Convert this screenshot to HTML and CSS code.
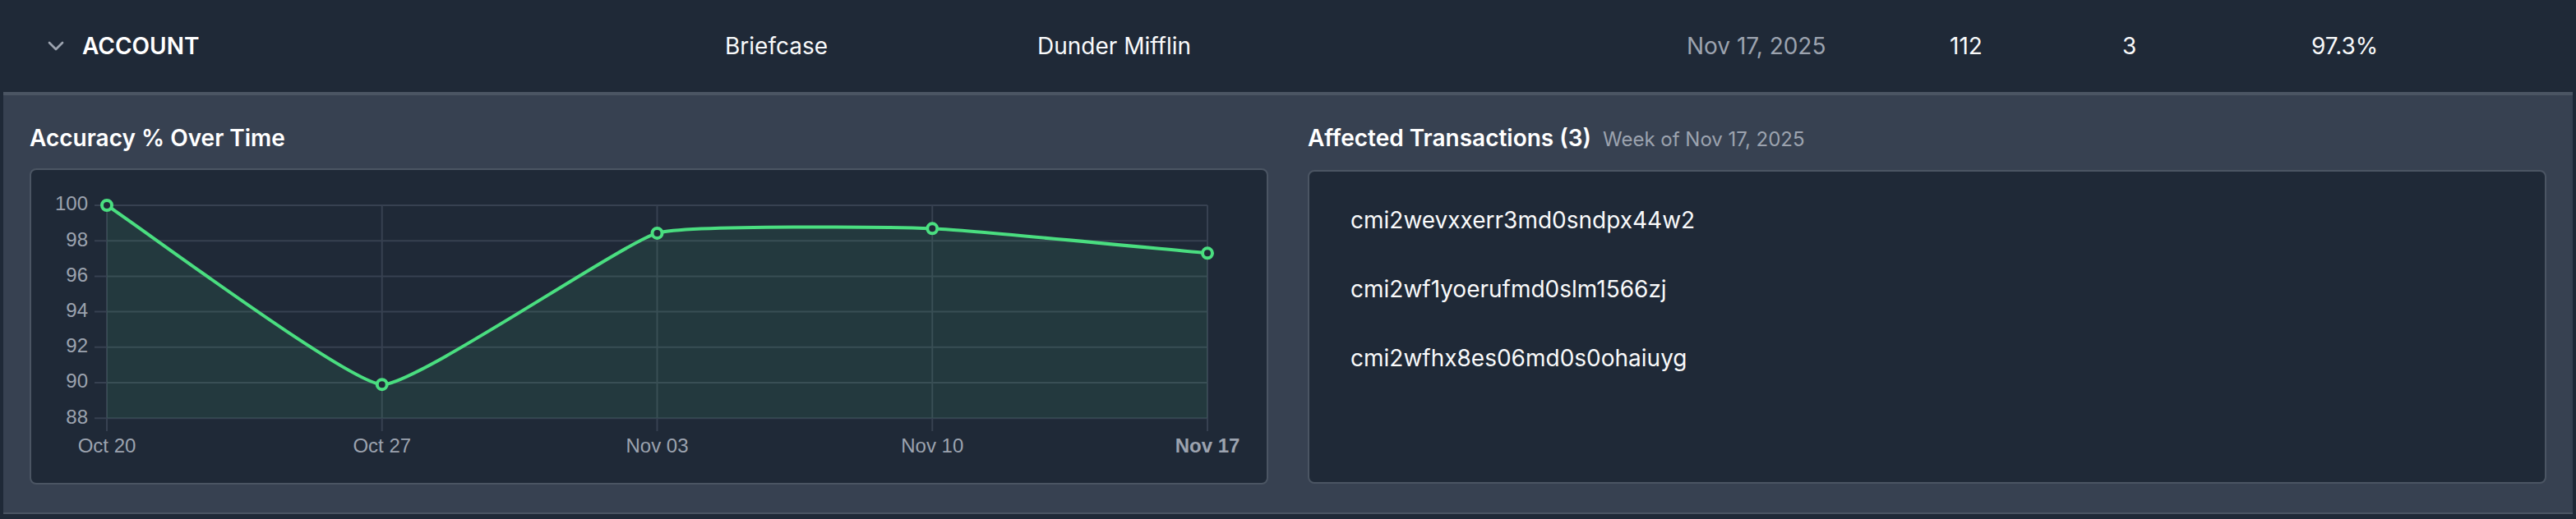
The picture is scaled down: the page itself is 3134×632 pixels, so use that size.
FILE: index.html
```html
<!DOCTYPE html>
<html lang="en">
<head>
<meta charset="utf-8">
<title>Account accuracy</title>
<link rel="stylesheet" href="styles.css">
</head>
<body>
<div class="table">
  <div class="row">
    <div class="cell cell-name">
      <svg class="chev" viewBox="0 0 24 24" width="32" height="32"><path d="m6 9 6 6 6-6" fill="none" stroke="#9ca3af" stroke-width="2" stroke-linecap="round" stroke-linejoin="round"/></svg>
      <span class="name">ACCOUNT</span>
    </div>
    <div class="cell">Briefcase</div>
    <div class="cell">Dunder Mifflin</div>
    <div class="cell muted">Nov 17, 2025</div>
    <div class="cell">112</div>
    <div class="cell">3</div>
    <div class="cell">97.3%</div>
  </div>
  <div class="panel">
    <section class="col">
      <h3 class="title">Accuracy % Over Time</h3>
      <div class="card chart-card">
        <svg class="chart" width="1503" height="381" viewBox="0 0 1503 381">
          <g class="grid" stroke="#374151" stroke-width="2">
            <line x1="77" y1="43" x2="1431" y2="43"/>
            <line x1="77" y1="86.2" x2="1431" y2="86.2"/>
            <line x1="77" y1="129.4" x2="1431" y2="129.4"/>
            <line x1="77" y1="172.6" x2="1431" y2="172.6"/>
            <line x1="77" y1="215.8" x2="1431" y2="215.8"/>
            <line x1="77" y1="259" x2="1431" y2="259"/>
            <line x1="77" y1="302.2" x2="1431" y2="302.2"/>
            <line x1="92" y1="43" x2="92" y2="318"/>
            <line x1="426.75" y1="43" x2="426.75" y2="318"/>
            <line x1="761.5" y1="43" x2="761.5" y2="318"/>
            <line x1="1096.25" y1="43" x2="1096.25" y2="318"/>
            <line x1="1431" y1="43" x2="1431" y2="318"/>
          </g>
          <path class="area" d="M92,43 C132.17,69.18 385.68,259.12 426.75,261.2 C466.02,263.19 718.68,89.05 761.5,76.9 C799.02,66.26 1056.16,69.84 1096.25,71.3 C1136.5,72.77 1390.83,97.7 1431,101.3 L1431,302.2 L92,302.2 Z"/>
          <path class="line" d="M92,43 C132.17,69.18 385.68,259.12 426.75,261.2 C466.02,263.19 718.68,89.05 761.5,76.9 C799.02,66.26 1056.16,69.84 1096.25,71.3 C1136.5,72.77 1390.83,97.7 1431,101.3"/>
          <g class="pts">
            <circle cx="92" cy="43" r="6"/>
            <circle cx="426.75" cy="261.2" r="6"/>
            <circle cx="761.5" cy="76.9" r="6"/>
            <circle cx="1096.25" cy="71.3" r="6"/>
            <circle cx="1431" cy="101.3" r="6"/>
          </g>
          <g class="ylab">
            <text x="69" y="43">100</text>
            <text x="69" y="86.2">98</text>
            <text x="69" y="129.4">96</text>
            <text x="69" y="172.6">94</text>
            <text x="69" y="215.8">92</text>
            <text x="69" y="259">90</text>
            <text x="69" y="302.2">88</text>
          </g>
          <g class="xlab">
            <text x="92" y="338">Oct 20</text>
            <text x="426.75" y="338">Oct 27</text>
            <text x="761.5" y="338">Nov 03</text>
            <text x="1096.25" y="338">Nov 10</text>
            <text class="bold" x="1431" y="338">Nov 17</text>
          </g>
        </svg>
      </div>
    </section>
    <section class="col">
      <h3 class="title">Affected Transactions (3) <span class="sub">Week of Nov 17, 2025</span></h3>
      <div class="card list-card">
        <div class="item">cmi2wevxxerr3md0sndpx44w2</div>
        <div class="item">cmi2wf1yoerufmd0slm1566zj</div>
        <div class="item">cmi2wfhx8es06md0s0ohaiuyg</div>
      </div>
    </section>
  </div>
</div>
</body>
</html>
```

FILE: styles.css
```css
* { box-sizing: border-box; }
html, body { margin: 0; padding: 0; }
body {
  background: #1f2937;
  font-family: Inter, "Noto Sans", sans-serif;
  color: #f9fafb;
  width: 3134px;
  height: 632px;
  overflow: hidden;
}
.table { padding: 0 4px; }
.row {
  height: 112px;
  display: grid;
  grid-template-columns: 830px 380px 790px 320px 210px 230px 1fr;
  align-items: center;
  padding-left: 48px;
  font-size: 28px;
  line-height: 40px;
}
.cell { white-space: nowrap; }
.cell-name { display: flex; align-items: center; gap: 16px; }
.chev { display: block; }
.name { font-weight: 600; color: #ffffff; }
.muted { color: #9ca3af; }
.panel {
  background: #374151;
  border-top: 4px solid #4b5563;
  border-bottom: 2px solid #4b5563;
  padding: 32px 32px 34px 32px;
  display: grid;
  grid-template-columns: 1fr 1fr;
  column-gap: 48px;
  align-items: start;
}
.title {
  margin: 0 0 17px 0;
  font-size: 28px;
  line-height: 40px;
  font-weight: 600;
  color: #ffffff;
  display: flex;
  align-items: baseline;
  gap: 14px;
}
.sub { font-size: 24px; font-weight: 400; color: #9ca3af; }
.card {
  background: #1f2937;
  border: 2px solid #4b5563;
  border-radius: 8px;
}
.chart-card { height: 385px; overflow: hidden; }
.chart { display: block; }
.area { fill: rgba(74, 222, 128, 0.09); stroke: none; }
.line { fill: none; stroke: #4ade80; stroke-width: 4; }
.pts circle { fill: #1f2937; stroke: #4ade80; stroke-width: 4; }
.ylab text, .xlab text {
  font-family: "Liberation Sans", Arial, sans-serif;
  font-size: 24px;
  fill: #9ca3af;
  dominant-baseline: middle;
}
.ylab text { text-anchor: end; }
.xlab text { text-anchor: middle; }
.xlab .bold { font-weight: 700; }
.list-card { height: 382px; padding: 17px 32px; }
.item {
  padding: 22px 18px;
  font-size: 28px;
  line-height: 40px;
  color: #f9fafb;
}
```
